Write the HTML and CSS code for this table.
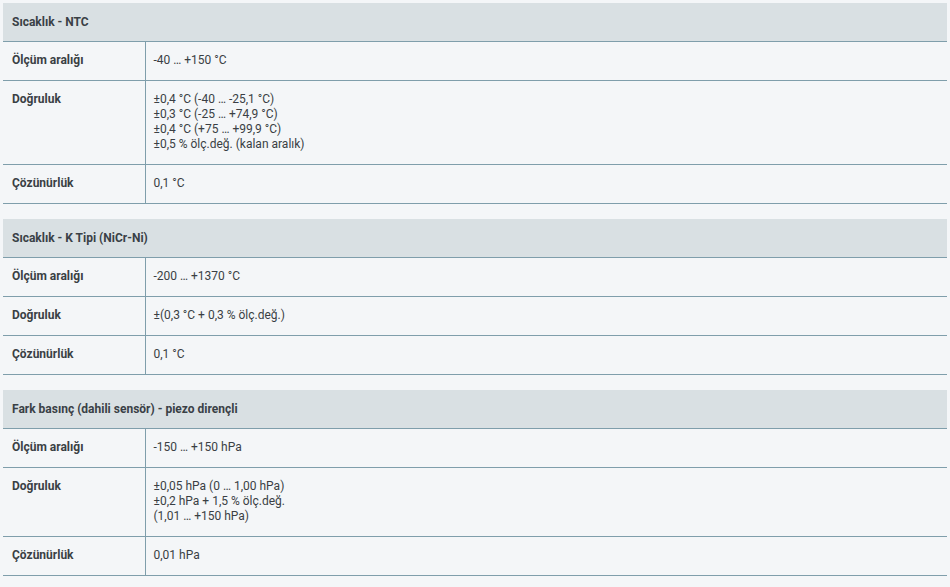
FILE: index.html
```html
<!DOCTYPE html>
<html lang="tr">
<head>
<meta charset="utf-8">
<link rel="stylesheet" href="styles.css">
</head>
<body>
<div class="page">
  <table class="spec">
    <colgroup><col class="col-label"><col class="col-value"></colgroup>
    <thead><tr><th colspan="2">Sıcaklık - NTC</th></tr></thead>
    <tbody>
      <tr><td class="label">Ölçüm aralığı</td><td class="value">-40 … +150 °C</td></tr>
      <tr><td class="label">Doğruluk</td><td class="value">±0,4 °C (-40 … -25,1 °C)<br>±0,3 °C (-25 … +74,9 °C)<br>±0,4 °C (+75 … +99,9 °C)<br>±0,5 % ölç.değ. (kalan aralık)</td></tr>
      <tr><td class="label">Çözünürlük</td><td class="value">0,1 °C</td></tr>
    </tbody>
  </table>
  <table class="spec">
    <colgroup><col class="col-label"><col class="col-value"></colgroup>
    <thead><tr><th colspan="2">Sıcaklık - K Tipi (NiCr-Ni)</th></tr></thead>
    <tbody>
      <tr><td class="label">Ölçüm aralığı</td><td class="value">-200 … +1370 °C</td></tr>
      <tr><td class="label">Doğruluk</td><td class="value">±(0,3 °C + 0,3 % ölç.değ.)</td></tr>
      <tr><td class="label">Çözünürlük</td><td class="value">0,1 °C</td></tr>
    </tbody>
  </table>
  <table class="spec">
    <colgroup><col class="col-label"><col class="col-value"></colgroup>
    <thead><tr><th colspan="2">Fark basınç (dahili sensör) - piezo dirençli</th></tr></thead>
    <tbody>
      <tr><td class="label">Ölçüm aralığı</td><td class="value">-150 … +150 hPa</td></tr>
      <tr><td class="label">Doğruluk</td><td class="value">±0,05 hPa (0 … 1,00 hPa)<br>±0,2 hPa + 1,5 % ölç.değ.<br>(1,01 … +150 hPa)</td></tr>
      <tr><td class="label">Çözünürlük</td><td class="value">0,01 hPa</td></tr>
    </tbody>
  </table>
</div>
</body>
</html>
```
FILE: styles.css
```css
html, body {
  margin: 0;
  padding: 0;
  background: #f4f6f8;
}
body {
  font-family: Roboto, "Liberation Sans", sans-serif;
  font-size: 12px;
  color: #3a3f44;
}
.page {
  padding: 3px 3px 0 3px;
  display: flex;
  flex-direction: column;
  gap: 15px;
}
.spec {
  width: 944px;
  border-collapse: collapse;
  table-layout: fixed;
}
.col-label {
  width: 142px;
}
.spec th {
  background: #d9e0e3;
  text-align: left;
  font-weight: 700;
  padding: 0 9px;
  height: 38px;
  line-height: 15px;
  border-bottom: 1px solid #7f9eab;
  color: #3a4046;
}
.spec td {
  padding: 11px 9px 12px;
  line-height: 15px;
  vertical-align: top;
  border-bottom: 1px solid #7f9eab;
}
.spec td.label {
  font-weight: 700;
  border-right: 1px solid #7f9eab;
}
.spec td.value {
  padding-left: 8px;
}
```
